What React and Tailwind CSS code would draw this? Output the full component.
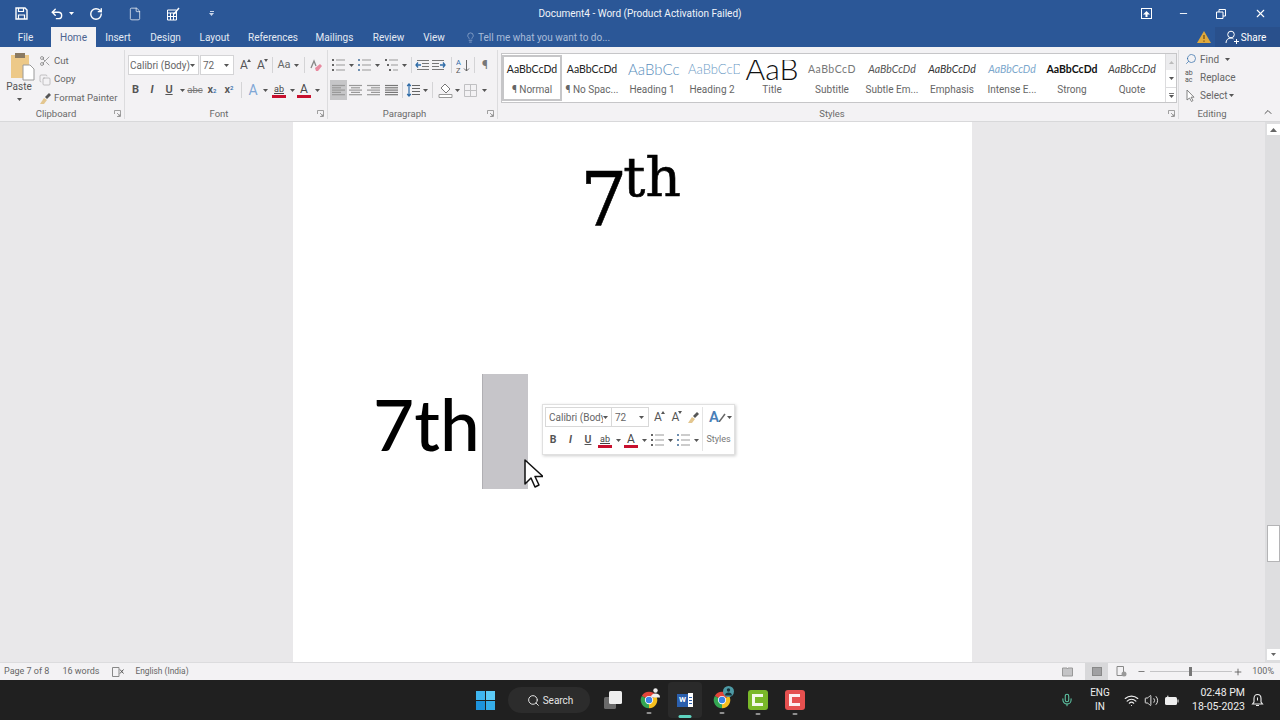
import {
  Scissors,
  Copy,
  Lightbulb,
  Undo2,
  RotateCw,
  File,
  Search,
  Mic,
  Wifi,
  Volume2,
  X,
  Minus,
  Plus,
  ChevronUp,
} from "lucide-react";
import clsx from "clsx";

function Caret({ className, color = "#555" }) {
  return (
    <svg width="5" height="3" viewBox="0 0 5 3" className={className}>
      <path d="M0 0h5L2.5 3z" fill={color} />
    </svg>
  );
}

function Tool({ className, children }) {
  return <div className={clsx("flex h-[20px] shrink-0 items-center justify-center", className)}>{children}</div>;
}

function Sep({ className }) {
  return (
    <div className={clsx("flex h-[20px] shrink-0 items-center justify-center", className)}>
      <div className="h-[16px] w-px bg-[#d4d4d6]" />
    </div>
  );
}

function Lines({ kind }) {
  const rows = {
    left: [[1, 14], [1, 10], [1, 14], [1, 10], [1, 14]],
    center: [[1, 14], [3, 12], [1, 14], [3, 12], [1, 14]],
    right: [[1, 14], [5, 14], [1, 14], [5, 14], [1, 14]],
    justify: [[1, 14], [1, 14], [1, 14], [1, 14], [1, 14]],
  }[kind];
  return (
    <svg width="15" height="14" viewBox="0 0 15 14">
      {rows.map(([a, b], i) => (
        <path key={i} d={`M${a} ${2.5 + i * 2.3}H${b}`} stroke={kind === "justify" ? "#777" : "#999"} strokeWidth="1.2" />
      ))}
    </svg>
  );
}

function ListIcon({ numbered, multi }) {
  return (
    <svg width="15" height="14" viewBox="0 0 15 14">
      {[2, 7, 12].map((y, i) => (
        <g key={y}>
          <rect x={multi ? 1 + i * 2 : 1} y={y - 1} width="2" height="2" fill={numbered ? "#6f8fb0" : "#666"} />
          <path d={`M${multi ? 5 + i * 2 : 5} ${y}H14`} stroke="#999" strokeWidth="1" />
        </g>
      ))}
    </svg>
  );
}

function IndentIcon({ flip }) {
  return (
    <svg width="15" height="14" viewBox="0 0 15 14" style={flip ? { transform: "scaleX(-1)" } : undefined}>
      {[2, 5, 8, 11].map((y, i) => (
        <path key={y} d={`M${i === 1 || i === 2 ? 7 : 2} ${y + 0.5}H14`} stroke="#777" strokeWidth="1" />
      ))}
      <path d="M6 7H1M3 4.5 1 7l2 2.5" stroke="#2f6ca8" strokeWidth="1.3" fill="none" />
    </svg>
  );
}

function PaintBrush() {
  return (
    <svg width="13" height="13" viewBox="0 0 13 13">
      <path d="M1 12 5 6l3 2-3 4z" fill="#e3c68f" />
      <path d="m6 5 4-4 2 2-4 4z" fill="#555" />
    </svg>
  );
}

function TextColor({ big }) {
  return (
    <div className="flex flex-col items-center leading-none">
      <span className={clsx("leading-[12px] text-[#444]", big ? "text-[13px]" : "text-[12px]")}>A</span>
      <div className="h-[3px] w-[14px] bg-[#c8102e]" />
    </div>
  );
}

function Highlight() {
  return (
    <div className="flex flex-col items-center leading-none">
      <span className="text-[9px] leading-[12px] text-[#444] underline">ab</span>
      <div className="h-[3px] w-[14px] bg-[#c8102e]" />
    </div>
  );
}

function GrowA({ small }) {
  return (
    <span className="relative text-[12px] leading-none text-[#555]">
      A
      <svg width="4" height="3" viewBox="0 0 4 3" className="absolute right-[-3px] top-0">
        <path d={small ? "M0 0h4L2 3z" : "M0 3h4L2 0z"} fill="#555" />
      </svg>
    </span>
  );
}

function Launcher() {
  return (
    <svg width="7" height="7" viewBox="0 0 7 7">
      <path d="M.5 4V.5H6.5V6.5H3M3 3 6 6M6 4v2H4" stroke="#8a8a8a" strokeWidth=".8" fill="none" />
    </svg>
  );
}

function Group({ className, labelClass, label, children, launcher = true }) {
  return (
    <div className={clsx("flex shrink-0 flex-col border-r border-[#dcdcde] pt-[5px]", className)}>
      <div className="flex-1">{children}</div>
      <div className="grid h-[11px] grid-cols-[1fr_auto_1fr] items-center">
        <span />
        <span className={clsx("text-[9.5px] leading-none text-[#6a6a6a]", labelClass)}>{label}</span>
        {launcher ? (
          <span className="flex justify-end pr-[3px]">
            <Launcher />
          </span>
        ) : (
          <span />
        )}
      </div>
    </div>
  );
}

function TitleBar() {
  return (
    <div className="grid h-[27px] grid-cols-[1fr_auto_1fr] items-center text-white">
      <div className="flex items-center pl-[15px]">
        <svg width="13" height="13" viewBox="0 0 13 13">
          <path d="M1 1h9l2 2v9H1z" fill="none" stroke="#fff" strokeWidth="1.4" />
          <path d="M3.5 1v3.5h5V1M3.5 12V8h6v4" fill="none" stroke="#fff" strokeWidth="1.2" />
        </svg>
        <Undo2 size={14} strokeWidth={2.4} className="ml-[22px]" />
        <Caret color="#fff" className="ml-[5px]" />
        <RotateCw size={14} strokeWidth={2.4} className="ml-[15px]" />
        <File size={14} strokeWidth={1.2} className="ml-[25px]" />
        <svg width="14" height="14" viewBox="0 0 14 14" className="ml-[24px]">
          <path d="M1.5 3h9v10h-9zM1.5 6h9M4.5 6v7M7.5 6v7M1.5 9.5h9" stroke="#fff" fill="none" />
          <path d="m8 7 5-6" stroke="#fff" strokeWidth="1.4" />
        </svg>
        <div className="ml-[29px] flex flex-col items-center gap-[1px]">
          <div className="h-px w-[4px] bg-[#c9d6ea]" />
          <Caret color="#c9d6ea" />
        </div>
      </div>
      <div className="text-[10px] text-[#f1f4f9]">Document4 - Word (Product Activation Failed)</div>
      <div className="flex items-center justify-end">
        <div className="mr-[26px] flex h-[11px] w-[11px] items-center justify-center border border-white">
          <svg width="7" height="6" viewBox="0 0 7 6">
            <path d="M3.5 0 7 3.5H4.5V6h-2V3.5H0z" fill="#fff" />
          </svg>
        </div>
        <Minus size={11} strokeWidth={2} className="mr-[27px]" />
        <svg width="10" height="10" viewBox="0 0 10 10" className="mr-[28px]">
          <path d="M.5 3h6.500v6.500H.5zM3 3V.5h6.500V7H7" fill="none" stroke="#fff" />
        </svg>
        <X size={13} strokeWidth={2} className="mr-[13px]" />
      </div>
    </div>
  );
}

function TabRow() {
  const tabs = [
    ["Insert", "w-[44px]"],
    ["Design", "w-[51px]"],
    ["Layout", "w-[47px]"],
    ["References", "w-[70px]"],
    ["Mailings", "w-[53px]"],
    ["Review", "w-[55px]"],
    ["View", "w-[36px]"],
  ];
  return (
    <div className="flex h-[20px] items-stretch text-[10px] text-[#e4eaf3]">
      <div className="flex w-[51px] items-center justify-center">File</div>
      <div className="flex w-[45px] items-center justify-center bg-[#f3f2f4] text-[#4a6390]">Home</div>
      {tabs.map(([t, w]) => (
        <div key={t} className={clsx("flex items-center justify-center", w)}>
          {t}
        </div>
      ))}
      <div className="ml-[13px] flex items-center text-[#a9bcd9]">
        <Lightbulb size={11} strokeWidth={1.4} />
        <span className="ml-[2px] whitespace-nowrap">Tell me what you want to do...</span>
      </div>
      <div className="ml-auto flex items-center">
        <svg width="14" height="12" viewBox="0 0 14 12" className="mr-[4px]">
          <path d="M7 0 14 12H0z" fill="#e0a93c" />
          <path d="M7 4v4M7 9.500v1.200" stroke="#6b4a10" strokeWidth="1.200" />
        </svg>
        <div className="flex h-full w-[65px] items-center justify-center bg-[#29508c] pr-[4px] text-white">
          <svg width="14" height="14" viewBox="0 0 14 14" className="mr-[2px]">
            <circle cx="6" cy="4.500" r="3.300" fill="none" stroke="#fff" />
            <path d="M1 13c0-3 2-5 5-5 1 0 2 .3 2.500 1M9 11.500h5M11.500 9v5" fill="none" stroke="#fff" />
          </svg>
          Share
        </div>
      </div>
    </div>
  );
}

function Clipboard() {
  return (
    <Group className="w-[125px]" labelClass="pr-[12px]" label="Clipboard">
      <div className="mt-[-3px] flex">
        <div className="flex w-[38px] flex-col items-center">
          <svg width="25" height="29" viewBox="0 0 25 29" className="ml-[6px]">
            <rect x="1" y="3" width="18" height="23" fill="#edc988" />
            <rect x="5" y="1" width="10" height="5" fill="#8a7a62" />
            <path d="M13 13h7l4 4v11H13z" fill="#fff" stroke="#9a9a9a" />
          </svg>
          <span className="text-[10px] leading-[12px] text-[#555]">Paste</span>
          <Caret className="mt-[5px]" />
        </div>
        <div className="flex flex-col text-[9.6px] text-[#666]">
          <div className="flex h-[18px] items-center">
            <Scissors size={12} strokeWidth={1.2} className="ml-[1px] mr-[3px] text-[#666]" />
            Cut
          </div>
          <div className="flex h-[19px] items-center">
            <Copy size={12} strokeWidth={1.1} className="ml-[1px] mr-[3px] text-[#999]" />
            Copy
          </div>
          <div className="flex h-[19px] items-center">
            <span className="ml-[1px] mr-[2px]">
              <PaintBrush />
            </span>
            <span className="whitespace-nowrap">Format Painter</span>
          </div>
        </div>
      </div>
    </Group>
  );
}

function FontGroup() {
  return (
    <Group className="w-[203px]" labelClass="pr-[14px]" label="Font">
      <div className="flex pl-[3px]">
        <div className="flex h-[20px] w-[71px] items-center justify-between border border-[#d4d4d6] bg-white pl-[1px] pr-[3px] text-[10px] text-[#666]">
          <span className="w-[60px] overflow-hidden whitespace-nowrap">Calibri (Body)</span>
          <Caret />
        </div>
        <div className="ml-px flex h-[20px] w-[34px] items-center justify-between border border-[#d4d4d6] bg-white pl-[2px] pr-[4px] text-[10px] text-[#666]">
          72
          <Caret />
        </div>
        <Tool className="w-[20px]"><GrowA /></Tool>
        <Tool className="w-[14px]"><GrowA small /></Tool>
        <Sep className="w-[8px]" />
        <Tool className="w-[16px] text-[11px] text-[#666]">Aa</Tool>
        <Tool className="w-[8px]"><Caret /></Tool>
        <Sep className="w-[8px]" />
        <Tool className="w-[16px]">
          <svg width="12" height="13" viewBox="0 0 12 13">
            <path d="M1 9 4 2l2 5" stroke="#888" strokeWidth="1.300" fill="none" />
            <path d="m5 9 5-4 2 2-4 5H6z" fill="#e88aa0" />
          </svg>
        </Tool>
      </div>
      <div className="mt-[5px] flex pl-[3px]">
        <Tool className="w-[15px] text-[11px] font-bold text-[#555]">B</Tool>
        <Tool className="w-[18px] text-[11px] font-bold italic text-[#555]">I</Tool>
        <Tool className="w-[16px] text-[11px] font-semibold text-[#555] underline">U</Tool>
        <Tool className="w-[10px]"><Caret /></Tool>
        <Tool className="w-[16px] text-[9.500px] text-[#777] line-through">abc</Tool>
        <Tool className="w-[18px] text-[11px] font-semibold text-[#555]">
          x<span className="text-[6px] text-[#2f6ca8] [vertical-align:-2px]">2</span>
        </Tool>
        <Tool className="w-[16px] text-[11px] font-semibold text-[#555]">
          x<span className="mb-[6px] text-[6px] text-[#2f6ca8]">2</span>
        </Tool>
        <Sep className="w-[8px]" />
        <Tool className="w-[16px] text-[14px] text-[#7fa7d6]">A</Tool>
        <Tool className="w-[8px]"><Caret /></Tool>
        <Tool className="w-[20px]"><Highlight /></Tool>
        <Tool className="w-[6px]"><Caret /></Tool>
        <Tool className="w-[18px]"><TextColor /></Tool>
        <Tool className="w-[8px]"><Caret /></Tool>
      </div>
    </Group>
  );
}

function ParagraphGroup() {
  return (
    <Group className="w-[170px]" labelClass="pr-[16px]" label="Paragraph">
      <div className="flex pl-[2px]">
        <Tool className="w-[16px]"><ListIcon /></Tool>
        <Tool className="w-[10px]"><Caret /></Tool>
        <Tool className="w-[16px]"><ListIcon numbered /></Tool>
        <Tool className="w-[10px]"><Caret /></Tool>
        <Tool className="w-[18px]"><ListIcon multi /></Tool>
        <Tool className="w-[8px]"><Caret /></Tool>
        <Sep className="w-[6px]" />
        <Tool className="w-[16px]"><IndentIcon /></Tool>
        <Tool className="w-[17px]"><IndentIcon flip /></Tool>
        <Sep className="w-[8px]" />
        <Tool className="w-[16px]">
          <svg width="14" height="15" viewBox="0 0 14 15">
            <text x="0" y="7" fontSize="7.500" fill="#2f6ca8">A</text>
            <text x="0" y="14.500" fontSize="7.500" fill="#555">Z</text>
            <path d="M10.500 2v11M8 10.500l2.500 2.500 2.500-2.500" fill="none" stroke="#666" />
          </svg>
        </Tool>
        <Sep className="w-[6px]" />
        <Tool className="w-[16px] text-[12px] text-[#777]">¶</Tool>
      </div>
      <div className="mt-[5px] flex pl-[2px]">
        <Tool className="w-[17px] bg-[#c6c6c8]"><Lines kind="left" /></Tool>
        <Tool className="w-[17px]"><Lines kind="center" /></Tool>
        <Tool className="w-[18px]"><Lines kind="right" /></Tool>
        <Tool className="w-[18px]"><Lines kind="justify" /></Tool>
        <Sep className="w-[4px]" />
        <Tool className="w-[18px]">
          <svg width="14" height="14" viewBox="0 0 14 14">
            <path d="M3 1v12M1.200 3 3 1l1.800 2M1.200 11 3 13l1.800-2" fill="none" stroke="#2f6ca8" strokeWidth="1.200" />
            <path d="M6 2.500h8M6 5.500h8M6 8.500h8M6 11.500h8" stroke="#666" />
          </svg>
        </Tool>
        <Tool className="w-[6px]"><Caret /></Tool>
        <Sep className="w-[9px]" />
        <Tool className="w-[16px]">
          <svg width="15" height="15" viewBox="0 0 15 15">
            <path d="m7 1 5 5-4 4-5-5z" fill="#fff" stroke="#777" />
            <path d="M1 11.500h13v3H1z" fill="#fff" stroke="#999" />
          </svg>
        </Tool>
        <Tool className="w-[8px]"><Caret /></Tool>
        <Tool className="w-[19px]">
          <svg width="13" height="13" viewBox="0 0 13 13">
            <path d="M.5.5h12v12H.5zM6.500.5v12M.5 6.500h12" fill="none" stroke="#c0c0c2" />
          </svg>
        </Tool>
        <Tool className="w-[8px]"><Caret /></Tool>
      </div>
    </Group>
  );
}

function StyleItem({ name, selected, previewClass, box = "h-[27px] pt-[2px]", preview = "AaBbCcDd" }) {
  return (
    <div
      className={clsx(
        "flex h-[46px] w-[60px] shrink-0 flex-col items-center overflow-hidden",
        selected && "border-2 border-[#c6c6c8]"
      )}
    >
      <div
        className={clsx(
          "flex w-[56px] items-center justify-center overflow-hidden whitespace-nowrap [font-family:Lato,sans-serif]",
          selected && "mt-[-2px]",
          box,
          previewClass
        )}
      >
        {preview}
      </div>
      <div className="mt-[1px] text-[10px] leading-[13px] whitespace-nowrap text-[#666]">{name}</div>
    </div>
  );
}

function StylesGroup() {
  return (
    <Group className="w-[681px]" labelClass="pr-[12px]" label="Styles">
      <div className="ml-[3px] mt-[-2px] flex h-[50px] w-[676px] items-center border border-[#c6c6c8] bg-white">
        <StyleItem selected name="¶ Normal" previewClass="text-[10.500px] text-[#222]" />
        <StyleItem name="¶ No Spac..." previewClass="text-[10.500px] text-[#222]" />
        <StyleItem name="Heading 1" previewClass="justify-start pl-[4px] text-[15px] font-light text-[#5b8fbd]" />
        <StyleItem name="Heading 2" previewClass="justify-start pl-[4px] text-[13px] font-light text-[#6e9cc6]" />
        <StyleItem
          name="Title"
          preview="AaB"
          box="mb-[2px] mt-[5px] h-[20px]"
          previewClass="items-end text-[30px] leading-[24px] font-light text-[#111]"
        />
        <StyleItem name="Subtitle" preview="AaBbCcD" previewClass="text-[10.500px] tracking-[0.5px] text-[#777]" />
        <StyleItem name="Subtle Em..." previewClass="text-[10.500px] italic text-[#555]" />
        <StyleItem name="Emphasis" previewClass="text-[10.500px] italic text-[#333]" />
        <StyleItem name="Intense E..." previewClass="text-[10.500px] italic text-[#7ba7cc]" />
        <StyleItem name="Strong" previewClass="text-[10.500px] font-bold text-[#111]" />
        <StyleItem name="Quote" previewClass="text-[10.500px] italic text-[#444]" />
        <div className="ml-auto flex h-full w-[11px] flex-col border-l border-[#dcdcde]">
          <div className="flex h-[16px] items-center justify-center bg-[#ececee]">
            <svg width="5" height="3" viewBox="0 0 5 3"><path d="M0 3h5L2.500 0z" fill="#bbb" /></svg>
          </div>
          <div className="flex h-[17px] items-center justify-center">
            <Caret />
          </div>
          <div className="flex flex-1 flex-col items-center justify-center gap-[1px] border-t border-[#dcdcde]">
            <div className="h-px w-[5px] bg-[#777]" />
            <Caret />
          </div>
        </div>
      </div>
    </Group>
  );
}

function EditingGroup() {
  return (
    <Group className="w-[66px] border-r-0" label="Editing" launcher={false}>
      <div className="mt-[-5px] flex flex-col pl-[6px] text-[10px] text-[#666]">
        <div className="flex h-[18px] items-center">
          <Search size={12} strokeWidth={1.400} className="mr-[3px] w-[12px] -scale-x-100 text-[#2f6ca8]" />
          Find
          <Caret className="ml-[6px]" />
        </div>
        <div className="flex h-[18px] items-center">
          <span className="mr-[3px] w-[12px] text-[7px] leading-[7px] text-[#555]">ab<br />ac</span>
          Replace
        </div>
        <div className="flex h-[18px] items-center">
          <svg width="12" height="13" viewBox="0 0 12 13" className="mr-[3px]">
            <path d="M2 1v10l2.500-2 2 3.500 1.500-1-2-3.300H9z" fill="#fff" stroke="#777" strokeWidth=".9" />
          </svg>
          Select
          <Caret className="ml-[2px]" />
        </div>
      </div>
    </Group>
  );
}

function Ribbon() {
  return (
    <div className="flex h-[75px] border-b border-[#d8d8da] bg-[#f3f2f4] pb-[2px] pt-[3px]">
      <Clipboard />
      <FontGroup />
      <ParagraphGroup />
      <StylesGroup />
      <EditingGroup />
      <div className="flex flex-1 items-end justify-end pb-[1px] pr-[6px]">
        <ChevronUp size={12} strokeWidth={2} className="text-[#555]" />
      </div>
    </div>
  );
}

function MiniToolbar() {
  return (
    <div className="absolute left-[249px] top-[282px] flex h-[51px] w-[193px] border border-[#e0e0e0] bg-white pl-[2px] pt-[2px] shadow-[1px_1px_3px_rgba(0,0,0,0.2)]">
      <div className="w-[157px]">
        <div className="flex">
          <div className="flex h-[20px] w-[67px] items-center justify-between border border-[#d8d8d8] pl-[3px] pr-[3px] text-[10px] text-[#666]">
            <span className="w-[54px] overflow-hidden whitespace-nowrap">Calibri (Body)</span>
            <Caret />
          </div>
          <div className="flex h-[20px] w-[37px] items-center justify-between border border-l-0 border-[#d8d8d8] pl-[3px] pr-[4px] text-[10px] text-[#666]">
            72
            <Caret />
          </div>
          <Tool className="w-[18px]"><GrowA /></Tool>
          <Tool className="w-[17px]"><GrowA small /></Tool>
          <Tool className="w-[18px]"><PaintBrush /></Tool>
        </div>
        <div className="mt-[3px] flex">
          <Tool className="w-[16px] text-[10.500px] font-bold text-[#555]">B</Tool>
          <Tool className="w-[19px] text-[10.500px] font-bold italic text-[#555]">I</Tool>
          <Tool className="w-[16px] text-[10.500px] font-semibold text-[#555] underline">U</Tool>
          <Tool className="w-[18px]"><Highlight /></Tool>
          <Tool className="w-[8px]"><Caret /></Tool>
          <Tool className="w-[18px]"><TextColor /></Tool>
          <Tool className="w-[8px]"><Caret /></Tool>
          <Tool className="w-[18px]"><ListIcon /></Tool>
          <Tool className="w-[8px]"><Caret /></Tool>
          <Tool className="w-[18px]"><ListIcon numbered /></Tool>
          <Tool className="w-[8px]"><Caret /></Tool>
        </div>
      </div>
      <div className="mb-[3px] w-[32px] border-l border-[#e4e4e4]">
        <div className="flex h-[20px] items-center justify-center pl-[4px]">
          <span className="text-[15px] font-semibold leading-none text-[#4a7fb8]">A</span>
          <svg width="7" height="9" viewBox="0 0 7 9"><path d="m0 9 6-8" stroke="#666" strokeWidth="1.500" /></svg>
          <Caret className="ml-[1px]" />
        </div>
        <div className="mt-[3px] flex h-[20px] items-center justify-center text-[9px] text-[#777]">Styles</div>
      </div>
    </div>
  );
}

function Page() {
  return (
    <div className="relative h-full w-[679px] bg-white">
      <div className="flex justify-center pr-[6px] pt-[20px] text-black [-webkit-text-stroke:0.6px_black] [font-family:'DejaVu_Serif',serif]">
        <span className="ml-[2px] mt-[13px] text-[74px] leading-[90px]">7</span>
        <span className="ml-[-4px] text-[55px] leading-[70px]">th</span>
      </div>
      <div className="mt-[129px] flex pl-[80px]">
        <span className="text-[71px] font-medium leading-[99px] text-black [font-family:Lato,sans-serif]">7th</span>
        <div className="ml-[2px] h-[115px] w-[46px] border-l border-l-[#b0afb3] bg-[#c6c5c9]" />
      </div>
      <MiniToolbar />
      <svg width="20" height="30" viewBox="0 0 20 30" className="absolute left-[230px] top-[337px]">
        <path d="M2 1v24l6-6 4 9 4-2-4-8.500h8z" fill="#fff" stroke="#111" strokeWidth="1.500" strokeLinejoin="round" />
      </svg>
    </div>
  );
}

function Scrollbar() {
  return (
    <div className="flex w-[15px] flex-col items-end bg-[#dedee0] pt-[2px]">
      <div className="flex h-[11px] w-[13px] items-center justify-center bg-white">
        <svg width="7" height="4" viewBox="0 0 7 4"><path d="M0 4h7L3.500 0z" fill="#666" /></svg>
      </div>
      <div className="mt-[390px] h-[37px] w-[13px] border border-[#b4b4b6] bg-white" />
      <div className="mt-auto mb-[2px] flex h-[11px] w-[13px] items-center justify-center bg-white">
        <Caret color="#666" />
      </div>
    </div>
  );
}

function StatusBar() {
  return (
    <div className="flex h-[18px] items-center border-t border-[#dcdcde] bg-[#f3f2f4] text-[9px] text-[#666]">
      <span className="ml-[4px]">Page 7 of 8</span>
      <span className="ml-[13px]">16 words</span>
      <svg width="12" height="10" viewBox="0 0 12 10" className="ml-[13px]">
        <path d="M.5.5h6.500v9H.5z" fill="none" stroke="#888" />
        <path d="m8 2.500 3.500 4M11.500 2.500 8 6.500" stroke="#555" />
      </svg>
      <span className="ml-[11px] text-[8.4px]">English (India)</span>
      <div className="ml-auto flex h-full items-center">
        <svg width="11" height="10" viewBox="0 0 11 10">
          <path d="M.5 1h4.500l.5 1 .5-1h4.500v8H.5z" fill="#c4c4c6" stroke="#999" />
        </svg>
        <div className="ml-[12px] flex h-full w-[23px] items-center justify-center bg-[#d8d8da]">
          <div className="h-[9px] w-[10px] border border-[#888] bg-[#a0a0a2]" />
        </div>
        <svg width="11" height="11" viewBox="0 0 11 11" className="ml-[8px]">
          <path d="M1 .5h6.500v9H1z" fill="none" stroke="#888" />
          <circle cx="8" cy="8" r="2.500" fill="#999" />
        </svg>
        <Minus size={9} strokeWidth={2} className="ml-[10px] text-[#555]" />
        <div className="relative ml-[4px] h-px w-[82px] bg-[#c4c4c6]">
          <div className="absolute left-[39px] top-[-4px] h-[9px] w-[3px] bg-[#777]" />
        </div>
        <Plus size={10} strokeWidth={2} className="ml-[1px] text-[#555]" />
        <span className="ml-[9px] mr-[6px]">100%</span>
      </div>
    </div>
  );
}

function Chrome({ className }) {
  return (
    <svg width="18" height="18" viewBox="0 0 24 24" className={className}>
      <path d="M12 12 2.470 6.500a11 11 0 0 1 19.060 0z" fill="#e2453a" />
      <path d="M12 12 21.530 6.500A11 11 0 0 1 12 23z" fill="#f5bf1f" />
      <path d="M12 12v11A11 11 0 0 1 2.470 6.500z" fill="#34a652" />
      <circle cx="12" cy="12" r="5.500" fill="#fff" />
      <circle cx="12" cy="12" r="4.300" fill="#3b82e8" />
    </svg>
  );
}

function Dash({ className }) {
  return <div className={clsx("absolute bottom-[-5px] left-1/2 h-[2px] w-[5px] -translate-x-1/2 rounded-full bg-[#8f8f8f]", className)} />;
}

function CamIcon({ bg }) {
  return (
    <svg width="20" height="20" viewBox="0 0 20 20">
      <rect width="20" height="20" rx="3" fill={bg} />
      <path d="M15 5.500H5.500v9H15" fill="none" stroke="#fff" strokeOpacity=".9" strokeWidth="3" />
    </svg>
  );
}

function Taskbar() {
  return (
    <div className="flex h-[40px] items-center bg-[#202020] pl-[476px] pr-[16px] text-white">
      <svg width="19" height="19" viewBox="0 0 19 19">
        <path d="M0 0h9v9H0z" fill="#3fb6f0" />
        <path d="M10 0h9v9h-9z" fill="#5ccbf7" />
        <path d="M0 10h9v9H0z" fill="#1d93dc" />
        <path d="M10 10h9v9h-9z" fill="#36aeea" />
      </svg>
      <div className="ml-[13px] flex h-[26px] w-[82px] items-center justify-center rounded-full bg-[#2c2c2c] pl-[2px] text-[10px] text-[#e4e4e4]">
        <Search size={13} strokeWidth={1.800} className="mr-[3px]" />
        Search
      </div>
      <svg width="20" height="20" viewBox="0 0 20 20" className="ml-[13px]">
        <rect x="1" y="7" width="12" height="12" rx="1.500" fill="#6a6a6a" />
        <rect x="6" y="1" width="13" height="13" rx="1.500" fill="#eeeeee" />
      </svg>
      <div className="relative ml-[17px]">
        <Chrome />
        <svg width="9" height="10" viewBox="0 0 9 10" className="absolute right-[-2px] top-[-3px]">
          <circle cx="4.500" cy="2.500" r="2.200" fill="#eee" />
          <path d="M0 9.500c0-3 2-4 4.500-4s4.500 1 4.500 4z" fill="#eee" />
        </svg>
        <Dash />
      </div>
      <div className="relative ml-[10px] flex h-[36px] w-[34px] items-center justify-center rounded-[4px] bg-[#2a2a2a]">
        <div className="flex h-[14px] w-[16px] items-center">
          <div className="z-10 flex h-[13px] w-[11px] items-center justify-center bg-[#2b5fad] text-[8px] font-bold text-white">W</div>
          <div className="flex h-[14px] w-[5px] flex-col justify-center gap-[2px] bg-white pl-[1px]">
            <div className="h-px w-[3px] bg-[#2b5fad]" />
            <div className="h-px w-[3px] bg-[#2b5fad]" />
            <div className="h-px w-[3px] bg-[#2b5fad]" />
          </div>
        </div>
        <div className="absolute bottom-[0px] left-1/2 h-[3px] w-[13px] -translate-x-1/2 rounded-full bg-[#5fd4c0]" />
      </div>
      <div className="relative ml-[11px]">
        <Chrome />
        <div className="absolute right-[-3px] top-[-5px] flex h-[11px] w-[11px] items-center justify-center rounded-full bg-[#4d9aa5]">
          <svg width="7" height="8" viewBox="0 0 9 10">
            <circle cx="4.500" cy="2.500" r="2.200" fill="#16323a" />
            <path d="M0 9.500c0-3 2-4 4.500-4s4.500 1 4.500 4z" fill="#16323a" />
          </svg>
        </div>
        <Dash />
      </div>
      <div className="relative ml-[17px]">
        <CamIcon bg="#79b829" />
        <Dash />
      </div>
      <div className="relative ml-[17px]">
        <CamIcon bg="#e5504f" />
        <Dash />
      </div>
      <div className="ml-auto flex items-center">
        <Mic size={14} strokeWidth={1.800} className="text-[#5fc7a6]" />
        <div className="ml-[15px] w-[22px] text-center text-[10px] leading-[14px] text-[#eee]">
          ENG
          <br />
          IN
        </div>
        <Wifi size={15} strokeWidth={1.800} className="ml-[13px] text-[#eee]" />
        <Volume2 size={15} strokeWidth={1.500} className="ml-[5px] text-[#eee]" />
        <svg width="15" height="11" viewBox="0 0 15 11" className="ml-[5px]">
          <rect x="1" y="2" width="12" height="8" rx="1.500" fill="#eee" />
          <path d="M14 4.500v3" stroke="#eee" />
          <path d="M4 0 2 4h3z" fill="#eee" />
        </svg>
        <div className="ml-[13px] text-right text-[10.500px] leading-[14px] text-[#eee]">
          02:48 PM
          <br />
          18-05-2023
        </div>
        <svg width="13" height="14" viewBox="0 0 13 14" className="ml-[6px]">
          <path d="M1.500 11 3 9V5.500C3 3 4.500 1.500 6.500 1.500S10 3 10 5.500V9l1.500 2zM5 12.500h3" fill="none" stroke="#eee" strokeWidth="1.100" />
          <path d="M6.500 4.500v3" stroke="#eee" />
        </svg>
      </div>
    </div>
  );
}

export default function App() {
  return (
    <div className="flex h-[720px] w-[1280px] flex-col overflow-hidden bg-[#2b5797] [font-family:Roboto,sans-serif]">
      <TitleBar />
      <TabRow />
      <Ribbon />
      <div className="flex h-[540px] bg-[#e9e8ea]">
        <div className="flex flex-1 justify-center">
          <Page />
        </div>
        <Scrollbar />
      </div>
      <StatusBar />
      <Taskbar />
    </div>
  );
}
